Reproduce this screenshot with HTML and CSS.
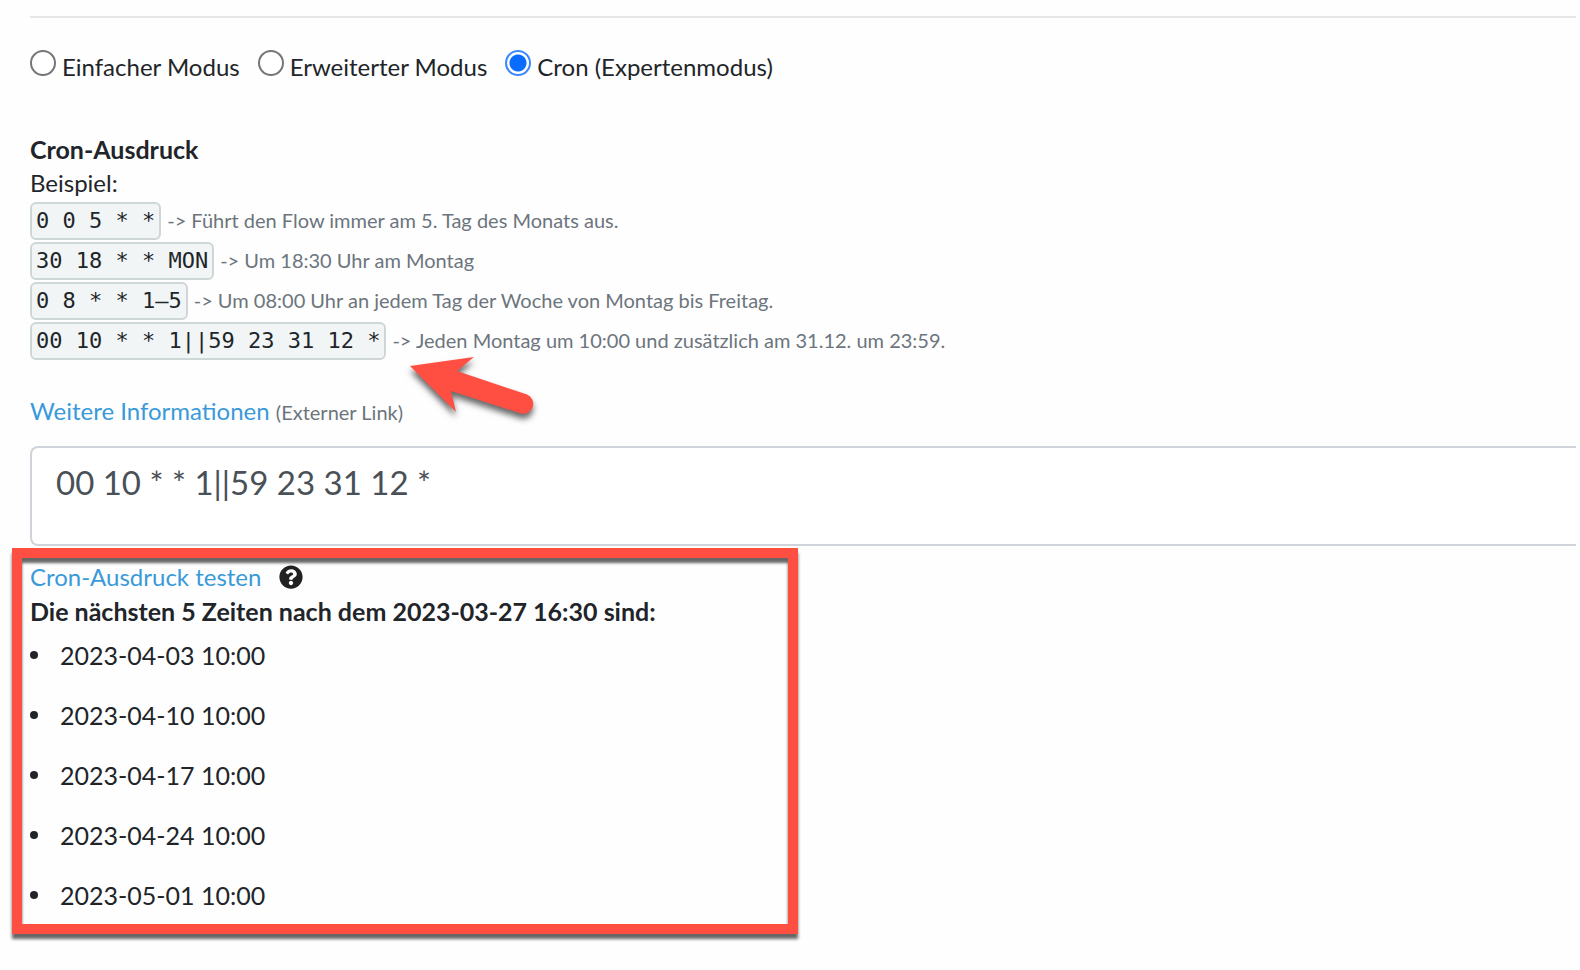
FILE: index.html
```html
<!DOCTYPE html>
<html lang="de">
<head>
<meta charset="utf-8">
<title>Cron-Ausdruck</title>
<link rel="stylesheet" href="styles.css">
</head>
<body>
<main class="page">
  <form class="settings">
    <hr class="divider">
    <div class="modes" role="radiogroup" aria-label="Modus">
      <label class="mode"><input class="radio" type="radio" name="mode">Einfacher Modus</label>
      <label class="mode"><input class="radio" type="radio" name="mode">Erweiterter Modus</label>
      <label class="mode"><input class="radio" type="radio" name="mode" checked>Cron (Expertenmodus)</label>
    </div>
    <label class="title" for="cron">Cron-Ausdruck</label>
    <p class="line">Beispiel:</p>
    <ul class="examples">
      <li class="example"><code class="code">0 0 5 * *</code><small class="hint">-&gt; Führt den Flow immer am 5. Tag des Monats aus.</small></li>
      <li class="example"><code class="code">30 18 * * MON</code><small class="hint">-&gt; Um 18:30 Uhr am Montag</small></li>
      <li class="example"><code class="code">0 8 * * 1–5</code><small class="hint">-&gt; Um 08:00 Uhr an jedem Tag der Woche von Montag bis Freitag.</small></li>
      <li class="example"><code class="code">00 10 * * 1||59 23 31 12 *</code><small class="hint">-&gt; Jeden Montag um 10:00 und zusätzlich am 31.12. um 23:59.</small>
        <svg class="arrow" viewBox="0 0 150 80" aria-hidden="true"><path d="M10 16 L74 7 L57 21 L127 44.5 A10 10 0 0 1 121 63.5 L51 41 L56 62 Z"/></svg>
      </li>
    </ul>
    <p class="more"><a class="link" href="#info">Weitere Informationen</a> <small class="hint">(Externer Link)</small></p>
    <textarea class="cron-input" id="cron" rows="1">00 10 * * 1||59 23 31 12 *</textarea>
  </form>
  <section class="result">
    <div class="test">
      <a class="link" href="#test">Cron-Ausdruck testen</a>
      <svg class="help" viewBox="0 0 512 512" role="img" aria-label="Hilfe"><path d="M504 256c0 136.997-111.043 248-248 248S8 392.997 8 256C8 119.083 119.043 8 256 8s248 111.083 248 248zM262.655 90c-54.497 0-89.255 22.957-116.549 63.758-3.536 5.286-2.353 12.415 2.715 16.258l34.699 26.31c5.205 3.947 12.621 3.008 16.665-2.122 17.864-22.658 30.113-35.797 57.303-35.797 20.429 0 45.698 13.148 45.698 32.958 0 14.976-12.363 22.667-32.534 33.976C247.128 238.528 216 254.941 216 296v4c0 6.627 5.373 12 12 12h56c6.627 0 12-5.373 12-12v-1.333c0-28.462 83.186-29.647 83.186-106.667 0-58.002-60.165-102-116.531-102zM256 338c-25.365 0-46 20.635-46 46 0 25.364 20.635 46 46 46s46-20.636 46-46c0-25.365-20.635-46-46-46z"/></svg>
    </div>
    <strong class="title">Die nächsten 5 Zeiten nach dem 2023-03-27 16:30 sind:</strong>
    <ul class="times">
      <li class="time">2023-04-03 10:00</li>
      <li class="time">2023-04-10 10:00</li>
      <li class="time">2023-04-17 10:00</li>
      <li class="time">2023-04-24 10:00</li>
      <li class="time">2023-05-01 10:00</li>
    </ul>
  </section>
</main>
</body>
</html>
```
FILE: styles.css
```css
* {
  box-sizing: border-box;
}

body {
  margin: 0;
  background: #fefefe;
  color: #212529;
  font-family: Lato, "Open Sans", sans-serif;
  font-size: 24px;
  line-height: 34px;
}

.page {
  padding: 16px 4px 32px 12px;
}

.settings {
  display: flex;
  flex-direction: column;
  padding-left: 18px;
}

.divider {
  width: 100%;
  height: 2px;
  margin: 0 0 32px;
  border: 0;
  background: #e6e6e6;
}

.modes {
  display: flex;
  flex-wrap: wrap;
  gap: 18px;
  margin-bottom: 48px;
}

.radio {
  appearance: none;
  width: 26px;
  height: 26px;
  margin: 0 6px 0 0;
  border: 2px solid #767676;
  border-radius: 50%;
  background: #fff;
}

.radio:checked {
  border-color: #3b88fd;
  background: radial-gradient(circle, #0a6cff 8px, #fff 9px);
}

.title {
  display: block;
  font-size: 25px;
  font-weight: 700;
}

.line {
  margin: 0;
}

.examples {
  display: flex;
  flex-direction: column;
  gap: 2px;
  margin: 2px 0 30px;
  padding: 0;
  list-style: none;
}

.example {
  position: relative;
  display: flex;
  align-items: baseline;
  gap: 6px;
}

.code {
  padding: 0 4px;
  border: 2px solid #cfd6d8;
  border-radius: 6px;
  background: #f1f5f6;
  font-family: "DejaVu Sans Mono", monospace;
  font-size: 22px;
}

.hint {
  color: #6c757d;
  font-size: 20px;
  line-height: 24px;
}

.arrow {
  position: absolute;
  top: 28px;
  left: 370px;
  width: 150px;
  height: 80px;
  fill: #ff4f43;
  filter: drop-shadow(0 5px 3px rgba(0, 0, 0, 0.6));
}

.more {
  margin: 4px 0 18px;
}

.link {
  color: #3a9ad9;
  text-decoration: none;
}

.cron-input {
  width: 100%;
  height: 100px;
  padding: 10px 24px;
  border: 2px solid #ced4da;
  border-right: 0;
  border-radius: 8px 0 0 8px;
  background: #fff;
  color: #495057;
  font-family: inherit;
  font-size: 33px;
  line-height: 48px;
  resize: none;
}

.result {
  max-width: 786px;
  margin-top: 2px;
  padding: 2px 8px 12px;
  border: 10px solid #ff4f43;
  box-shadow: 0 5px 3px rgba(0, 0, 0, 0.6), inset 0 5px 3px rgba(0, 0, 0, 0.6);
}

.test {
  display: flex;
  align-items: center;
  gap: 18px;
}

.help {
  width: 24px;
  height: 24px;
  fill: #212121;
}

.times {
  display: flex;
  flex-direction: column;
  gap: 26px;
  margin: 10px 0 0;
  padding: 0;
  font-size: 25px;
  list-style: none;
}

.time {
  display: flex;
  align-items: center;
  gap: 22px;
}

.time::before {
  width: 8px;
  height: 8px;
  border-radius: 50%;
  background: #212529;
  content: "";
}
```
